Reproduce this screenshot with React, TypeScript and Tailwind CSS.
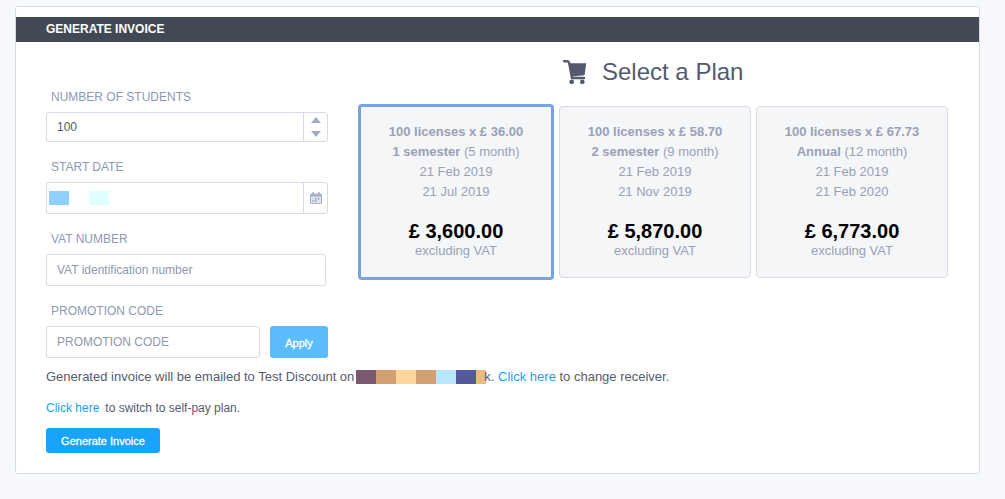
const font = "font-['Liberation_Sans',Arial,sans-serif]";

function Label({ children, className = "" }: { children: React.ReactNode; className?: string }) {
  return <div className={`pl-[5px] text-[12px] leading-[16px] uppercase text-[#8f98b3] ${className}`}>{children}</div>;
}

function Plan({ a, b, c, d, e, f, selected }: { a: string; b: string; c: string; d: string; e: string; f: string; selected?: boolean }) {
  return (
    <div
      className={`flex flex-col items-center rounded-[4px] bg-[#f4f6f8] text-[13px] leading-[20px] text-[#9aa1b7] ${
        selected ? "w-[196px] h-[176px] border-[3px] border-[#74a5de] pt-[15px]" : "w-[192px] h-[172px] mt-[2px] border border-[#d8dce8] pt-[15px]"
      }`}
    >
      <div className="font-bold">{a}</div>
      <div><b>{b}</b> {c}</div>
      <div>{d}</div>
      <div>{e}</div>
      <div className="mt-[19px] text-[20px] leading-[20px] font-bold text-black">{f}</div>
      <div className="leading-[20px]">excluding VAT</div>
    </div>
  );
}

function Cart() {
  return (
    <svg width="24" height="24" viewBox="0 0 24 24" className="shrink-0">
      <path d="M1.2 1.2H4.2Q5.8 1.2 6.2 3L9 18H21" fill="none" stroke="#535a6c" strokeWidth="2.4" strokeLinecap="round" strokeLinejoin="round" />
      <path d="M6.5 3.2H23.2L21.6 15.2L8.5 16.6Z" fill="#535a6c" />
      <circle cx="8.7" cy="21.8" r="2.3" fill="#535a6c" />
      <circle cx="19.3" cy="21.8" r="2.3" fill="#535a6c" />
    </svg>
  );
}

function Calendar() {
  return (
    <svg width="12" height="12" viewBox="0 0 12 12">
      <rect x="0" y="1.5" width="12" height="10.5" rx="1.2" fill="#a9b4cc" />
      <rect x="2.2" y="0" width="1.8" height="3" rx="0.6" fill="#a9b4cc" />
      <rect x="8" y="0" width="1.8" height="3" rx="0.6" fill="#a9b4cc" />
      <rect x="1" y="4.6" width="10" height="6.4" fill="#dfe4ef" />
      <rect x="5" y="6" width="1.5" height="1.5" fill="#8f9cb8" />
      <rect x="7.8" y="6" width="1.5" height="1.5" fill="#8f9cb8" />
      <rect x="2.4" y="8.2" width="1.5" height="1.5" fill="#8f9cb8" />
      <rect x="5" y="8.2" width="1.5" height="1.5" fill="#8f9cb8" />
    </svg>
  );
}

const patches = ["bg-[#7a5a70]", "bg-[#d2a070]", "bg-[#ffd699]", "bg-[#d2a070]", "bg-[#b8e6ff]", "bg-[#525a99]"];

export default function App() {
  return (
    <div className={`${font} min-h-[499px] bg-[#f7f8fc] pt-[6px] pl-[15px] text-[12px]`}>
      <div className="w-[965px] h-[468px] rounded-[3px] border border-[#d8dce8] bg-white">
        <div className="mt-[10px] h-[25px] bg-[#434954] pl-[30px] text-[12px] leading-[24px] font-bold text-white">GENERATE INVOICE</div>
        <div className="flex">
          <div className="ml-[30px] w-[282px] pt-[47px]">
            <Label>Number of students</Label>
            <div className="mt-[7px] flex h-[30px] rounded-[3px] border border-[#d8dce8]">
              <div className="flex-1 pl-[10px] leading-[28px] text-[#555b6e]">100</div>
              <div className="flex w-[24px] flex-col items-center justify-center gap-[8px] border-l border-[#d8dce8] pb-[1px]">
                <svg width="10" height="6" viewBox="0 0 10 6"><path d="M5 0L10 6H0Z" fill="#a3abc3" /></svg>
                <svg width="10" height="6" viewBox="0 0 10 6"><path d="M0 0H10L5 6Z" fill="#a3abc3" /></svg>
              </div>
            </div>
            <Label className="mt-[17px]">Start date</Label>
            <div className="mt-[7px] flex h-[32px] rounded-[3px] border border-[#d8dce8]">
              <div className="flex flex-1 items-center gap-[20px] pl-[2px]">
                <span className="h-[14px] w-[20px] bg-[#90d0ff]" />
                <span className="h-[14px] w-[20px] bg-[#e0ffff]" />
              </div>
              <div className="flex w-[24px] items-center justify-center border-l border-[#d8dce8]">
                <Calendar />
              </div>
            </div>
            <Label className="mt-[17px]">VAT number</Label>
            <div className="mt-[7px] h-[32px] w-[280px] rounded-[3px] border border-[#d8dce8] pl-[10px] leading-[30px] text-[#8f98ab]">VAT identification number</div>
            <Label className="mt-[17px]">Promotion code</Label>
            <div className="mt-[7px] flex justify-between">
              <div className="h-[32px] w-[214px] rounded-[3px] border border-[#d8dce8] pl-[10px] leading-[30px] text-[#8f98ab]">PROMOTION CODE</div>
              <div className="flex h-[32px] w-[58px] items-center justify-center rounded-[3px] bg-[#5bbcfd] pt-[2px] text-[11px] text-white [-webkit-text-stroke:0.3px_white]">Apply</div>
            </div>
          </div>
          <div className="ml-[30px]">
            <div className="flex h-[62px] items-center pl-[205px] pb-[2px]">
              <Cart />
              <span className="ml-[15px] text-[24px] leading-[28px] text-[#535a6c]">Select a Plan</span>
            </div>
            <div className="flex gap-[5px]">
              <Plan selected a="100 licenses x £ 36.00" b="1 semester" c="(5 month)" d="21 Feb 2019" e="21 Jul 2019" f="£ 3,600.00" />
              <div className="flex gap-[5px]">
                <Plan a="100 licenses x £ 58.70" b="2 semester" c="(9 month)" d="21 Feb 2019" e="21 Nov 2019" f="£ 5,870.00" />
                <Plan a="100 licenses x £ 67.73" b="Annual" c="(12 month)" d="21 Feb 2019" e="21 Feb 2020" f="£ 6,773.00" />
              </div>
            </div>
          </div>
        </div>
        <div className="ml-[30px] mt-[11px] flex h-[16px] items-center text-[13px] leading-[16px] text-[#555b6e]">
          <span>Generated invoice will be emailed to Test Discount on</span>
          <span className="ml-[2px] flex">
            {patches.map((p, i) => (
              <span key={i} className={`h-[14px] w-[20px] ${p}`} />
            ))}
            <span className="h-[14px] w-[10px] bg-[#eabb80]" />
          </span>
          <span className="ml-[-2px]">k.&nbsp;</span>
          <span className="text-[#1a9dfb]">Click here</span>
          <span>&nbsp;to change receiver.</span>
        </div>
        <div className="ml-[30px] mt-[15px] text-[12px] leading-[16px] text-[#555b6e]">
          <span className="text-[#1a9dfb]">Click here</span>
          <span className="ml-[6px]">to switch to self-pay plan.</span>
        </div>
        <div className="ml-[30px] mt-[12px] flex h-[25px] w-[114px] items-center justify-center rounded-[3px] bg-[#18a4fb] pt-[1px] text-[11px] text-white [-webkit-text-stroke:0.3px_white]">Generate Invoice</div>
      </div>
    </div>
  );
}
